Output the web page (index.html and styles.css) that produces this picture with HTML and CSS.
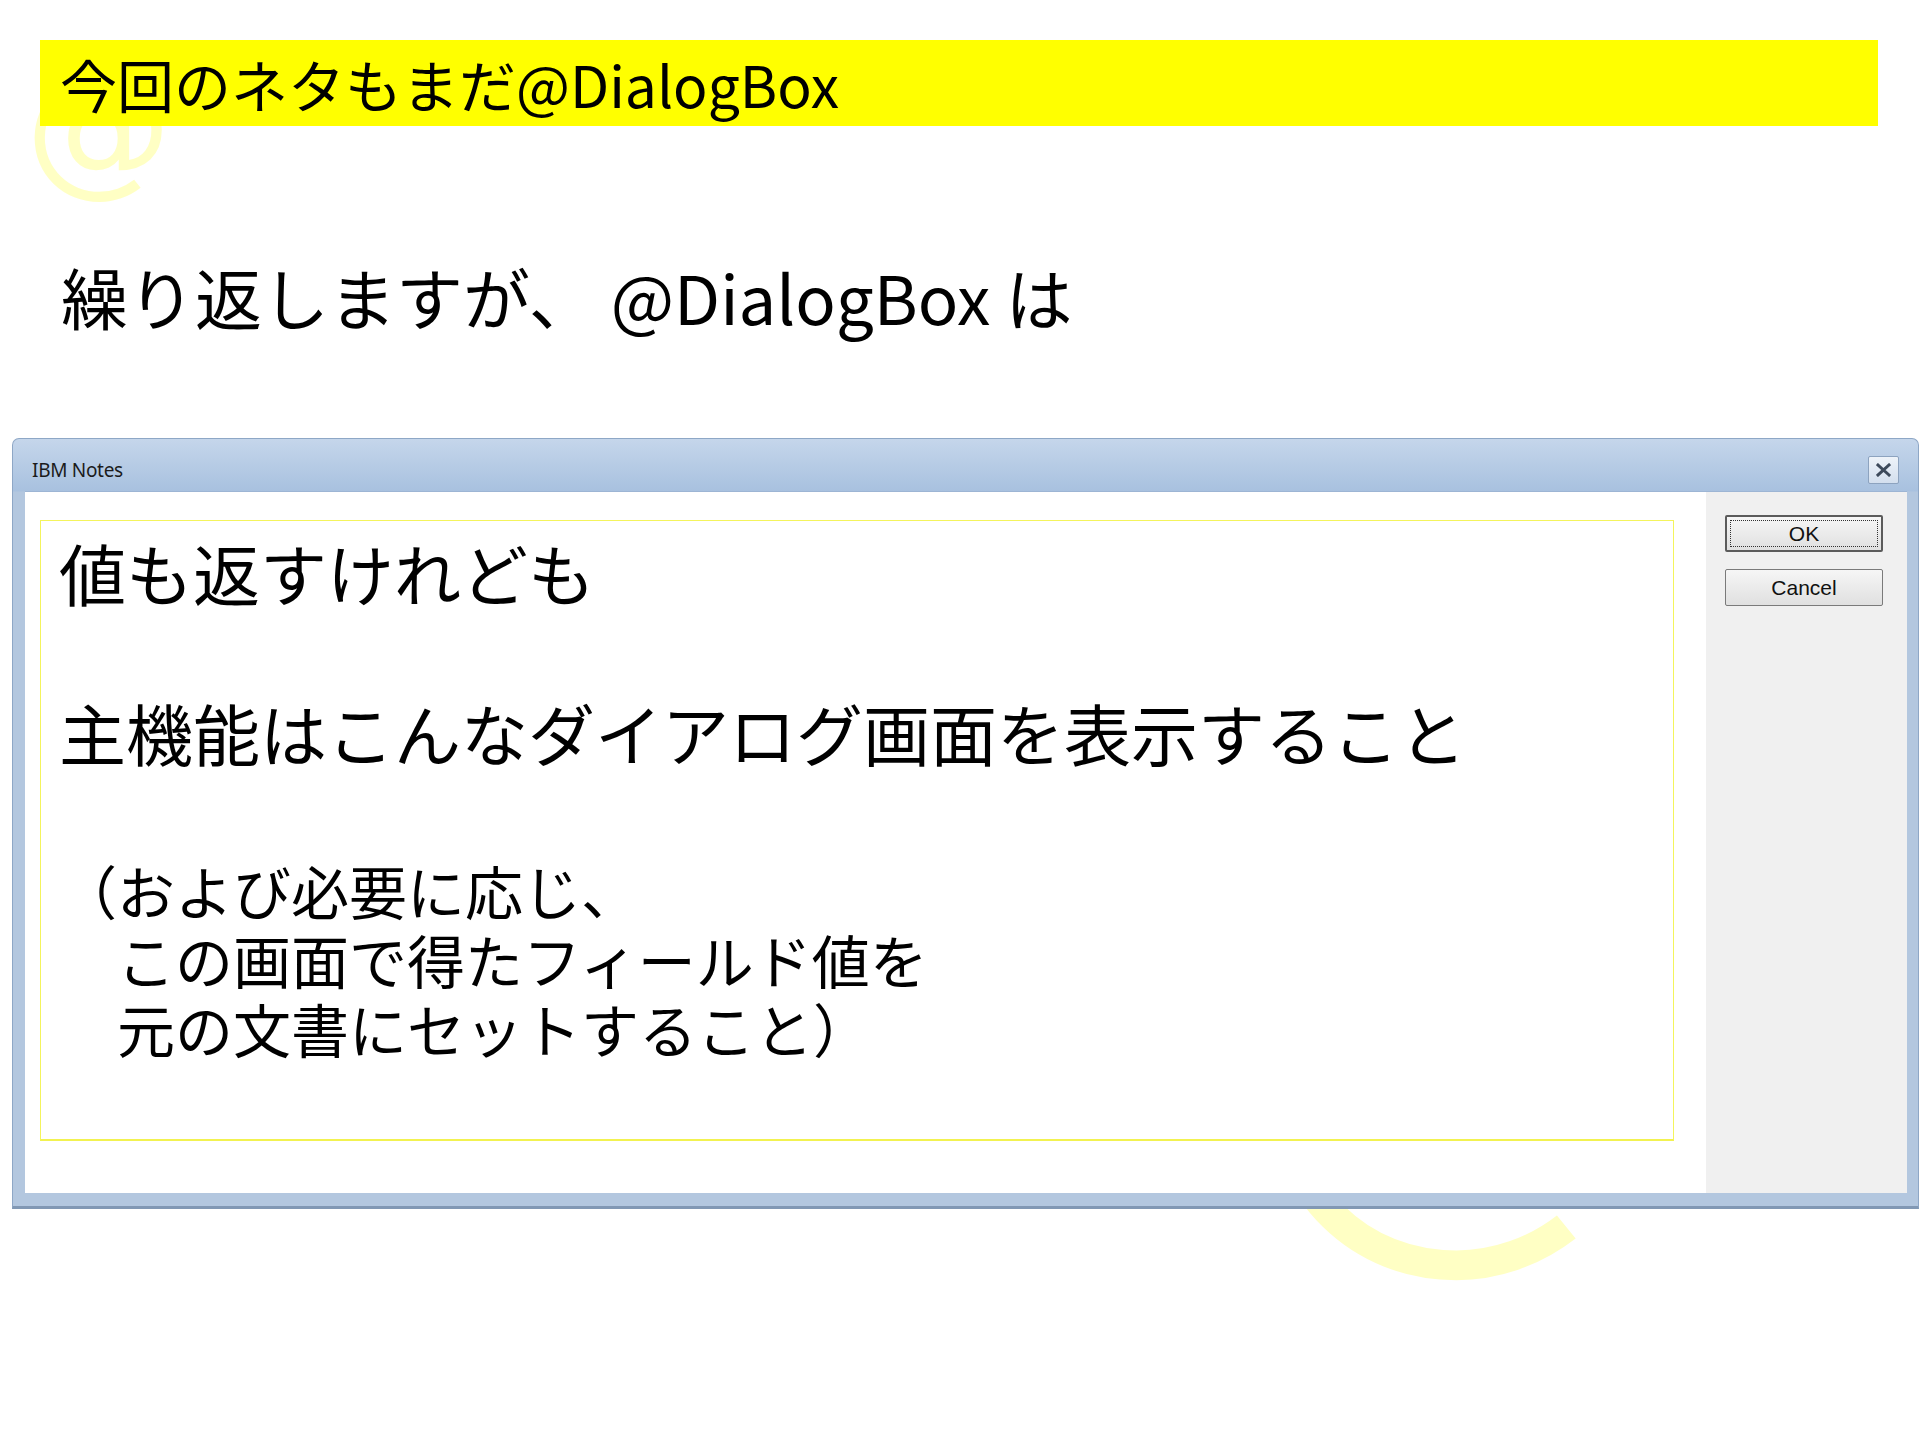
FILE: index.html
```html
<!DOCTYPE html>
<html lang="ja">
<head>
    <meta charset="utf-8">
    <title>@DialogBox</title>
    <link rel="stylesheet" href="styles.css">
</head>
<body>
    <!-- faint @ watermarks of the slide template -->
    <span class="mark mark-top">@</span>
    <span class="mark mark-bottom">@</span>

    <div class="slide">
        <div class="heading">今回のネタもまだ@DialogBox</div>

        <p class="lead">繰り返しますが、 @DialogBox は</p>

        <div class="dialog">
            <div class="titlebar">
                <span class="caption">IBM Notes</span>
                <button class="close" aria-label="close">
                    <svg width="15" height="14" viewBox="0 0 15 14">
                        <path d="M2 2 L13 12 M13 2 L2 12" stroke="#3d4a5b" stroke-width="3" stroke-linecap="square" fill="none"/>
                    </svg>
                </button>
            </div>

            <div class="client">
                <div class="form">
                    <div class="frame">
                        <p class="big">値も返すけれども</p>
                        <p class="big second">主機能はこんなダイアログ画面を表示すること</p>
                        <p class="small">（および必要に応じ、<br>　この画面で得たフィールド値を<br>　元の文書にセットすること）</p>
                    </div>
                </div>

                <div class="buttons">
                    <button class="btn default">OK</button>
                    <button class="btn">Cancel</button>
                </div>
            </div>
        </div>
    </div>
</body>
</html>
```

FILE: styles.css
```css
*{
    box-sizing: border-box;
}
body{
    margin: 0;
    width: 1920px;
    height: 1440px;
    position: relative;
    overflow: hidden;
    background-color: #fff;
    font-family: "Noto Sans CJK JP", "Noto Sans", sans-serif;
    color: #000;
}

.mark{
    position: absolute;
    z-index: 0;
    font-family: "DejaVu Sans", sans-serif;
    line-height: 1;
    color: #ffffc4;
}
.mark-top{
    left: 25px;
    top: 53px;
    font-size: 147px;
}
.mark-bottom{
    left: 1240px;
    top: 845px;
    font-size: 427px;
}

.slide{
    position: relative;
    z-index: 1;
    padding-top: 40px;
}

.heading{
    margin: 0 42px 0 40px;
    height: 86px;
    padding-left: 20px;
    background-color: #ffff00;
    font-size: 57px;
    line-height: 86px;
}

.lead{
    margin: 130px 0 0 61px;
    font-size: 67px;
    line-height: 80px;
}

/* IBM Notes dialog window */
.dialog{
    margin: 102px 0 0 12px;
    width: 1907px;
    border: 1px solid #8ea7c6;
    border-bottom: 3px solid #8198b4;
    border-radius: 7px 7px 0 0;
    background: linear-gradient(#c5d6eb, #a8c1df 52px, #b3c7df 53px);
    padding: 0 11px 13px 12px;
}
.titlebar{
    height: 52px;
    display: flex;
    align-items: center;
    justify-content: space-between;
    padding: 10px 8px 0 7px;
}
.caption{
    font-family: "Noto Sans", sans-serif;
    font-size: 19px;
    color: #1b1b1b;
    letter-spacing: -0.3px;
}
.close{
    width: 31px;
    height: 28px;
    padding: 0;
    display: flex;
    align-items: center;
    justify-content: center;
    background: linear-gradient(#eef3f9, #d3dfee);
    border: 1px solid #8da3bf;
    border-radius: 2px;
}

.client{
    display: flex;
    height: 702px;
    border-top: 1px solid #9db5d4;
}
.form{
    flex: 1;
    background-color: #fff;
    padding: 28px 32px 0 15px;
}
.frame{
    height: 621px;
    border: 1px solid #f4f45c;
    border-bottom: 2px solid #f2f250;
    padding: 0 0 0 18px;
}
.frame p{
    margin: 0;
}
.big{
    font-size: 67px;
    line-height: 80px;
    margin-top: 11px !important;
}
.big.second{
    margin-top: 80px !important;
}
.small{
    font-size: 58px;
    line-height: 69px;
    margin-top: 84px !important;
}

.buttons{
    width: 201px;
    background-color: #f0f0f0;
    padding: 23px 24px 0 19px;
    display: flex;
    flex-direction: column;
    gap: 17px;
}
.btn{
    position: relative;
    height: 37px;
    padding: 0;
    font-family: "Liberation Sans", sans-serif;
    font-size: 21px;
    color: #111;
    background: linear-gradient(#f6f6f6, #e0e0e0);
    border: 1px solid #7a7a7a;
    border-radius: 2px;
}
.btn.default{
    border: 2px solid #5b5b5b;
}
.btn.default::after{
    content: "";
    position: absolute;
    inset: 3px;
    border: 1px dotted #333;
}
```
